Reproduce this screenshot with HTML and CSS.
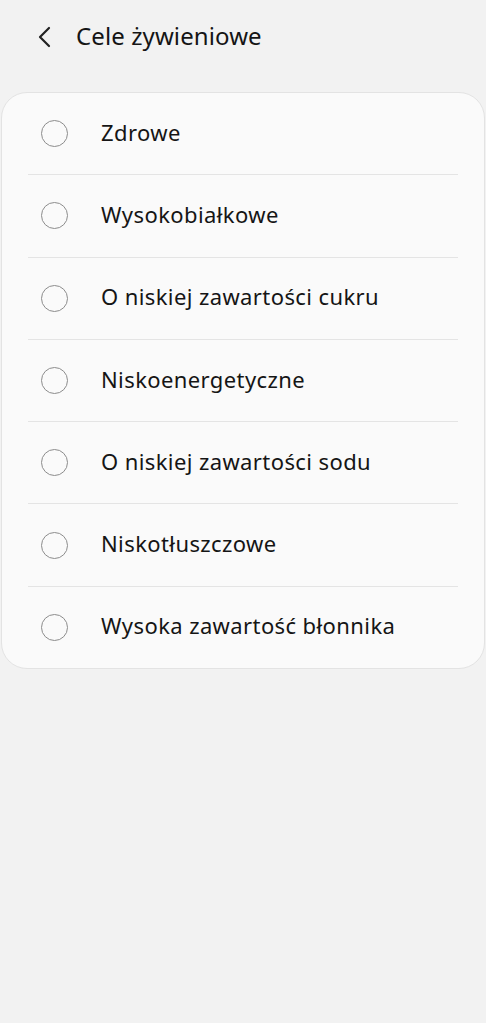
FILE: index.html
```html
<!doctype html>
<html lang="pl">
  <head>
    <meta charset="UTF-8" />
    <meta name="viewport" content="width=device-width, initial-scale=1.0" />
    <title>Cele żywieniowe</title>
    <link rel="stylesheet" href="styles.css">
  </head>
  <body>
    <div class="header">
      <button class="back-button">
        <svg width="14" height="22" viewBox="0 0 14 22">
          <path d="M12 2 L3 11 L12 20" fill="none" stroke="#222" stroke-width="2.2" stroke-linecap="round" stroke-linejoin="round" />
        </svg>
      </button>
      <h1>Cele żywieniowe</h1>
    </div>

    <div class="card">
      <label class="option"><span class="radio"></span><span class="option-text">Zdrowe</span></label>
      <label class="option"><span class="radio"></span><span class="option-text">Wysokobiałkowe</span></label>
      <label class="option"><span class="radio"></span><span class="option-text">O niskiej zawartości cukru</span></label>
      <label class="option"><span class="radio"></span><span class="option-text">Niskoenergetyczne</span></label>
      <label class="option"><span class="radio"></span><span class="option-text">O niskiej zawartości sodu</span></label>
      <label class="option"><span class="radio"></span><span class="option-text">Niskotłuszczowe</span></label>
      <label class="option"><span class="radio"></span><span class="option-text">Wysoka zawartość błonnika</span></label>
    </div>
  </body>
</html>
```

FILE: styles.css
```css
body {
  font-family: "Noto Sans", Roboto, sans-serif;
  background-color: #f2f2f2;
  color: #111;
  margin: 0;
  width: 486px;
  height: 1023px;
}
.header {
  display: flex;
  align-items: center;
  height: 74px;
  padding-left: 32px;
}
.back-button {
  display: flex;
  align-items: center;
  justify-content: center;
  width: 24px;
  height: 24px;
  padding: 0;
  margin-right: 20px;
  background-color: transparent;
  border: none;
}
h1 {
  margin: 0 0 3px 0;
  font-size: 24px;
  font-weight: 400;
  letter-spacing: 0.1px;
  color: #151515;
}
.card {
  margin: 18px 1px 0 1px;
  background-color: #fafafa;
  border: 1px solid #e3e3e3;
  border-radius: 26px;
  padding: 0 26px;
}
.option {
  display: flex;
  align-items: center;
  height: 81.3px;
  border-bottom: 1px solid #e4e4e4;
  cursor: pointer;
}
.option:last-child {
  border-bottom: none;
}
.radio {
  box-sizing: border-box;
  width: 27px;
  height: 27px;
  margin-left: 13px;
  margin-right: 33px;
  border: 1.6px solid #8c8c8c;
  border-radius: 50%;
}
.option-text {
  margin-bottom: 4px;
  font-size: 22px;
  letter-spacing: 0.4px;
  color: #151515;
}
```
